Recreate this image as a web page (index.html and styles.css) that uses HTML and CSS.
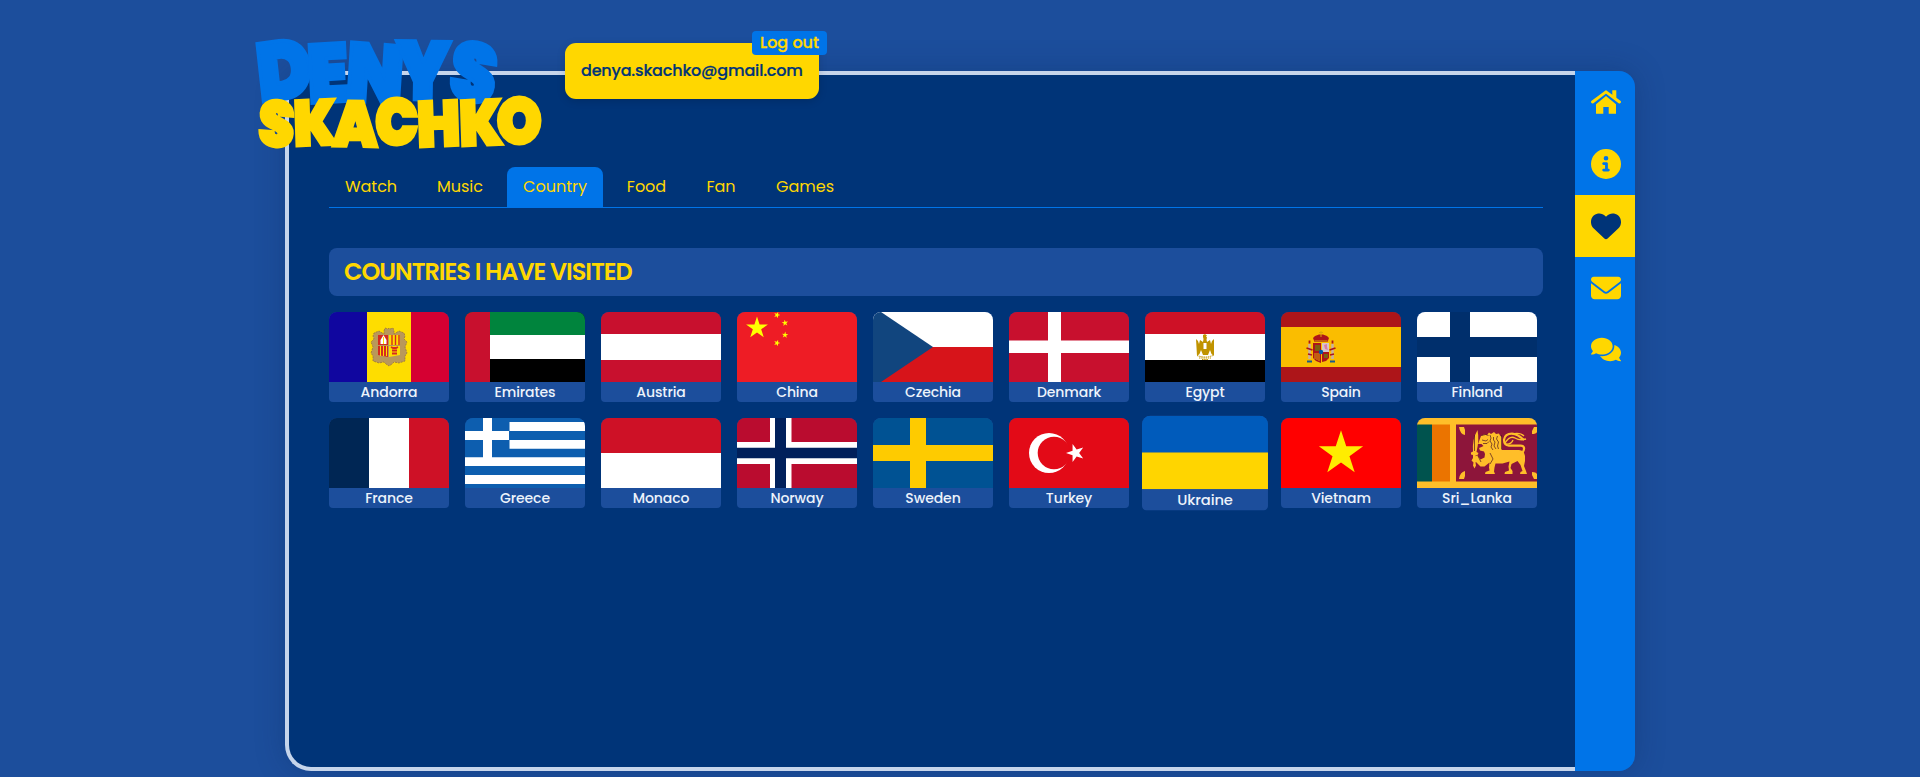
FILE: index.html
```html
<!DOCTYPE html>
<html lang="en">
<head>
<meta charset="utf-8">
<title>Denys Skachko</title>
<link rel="stylesheet" href="styles.css">
</head>
<body>
<div class="frame">
  <svg class="logo" viewBox="0 0 300 130" width="300" height="130" role="img" aria-label="Denys Skachko">
    <g transform="scale(.9 1)">
      <text class="logo-first" x="11 65 105 162 219" y="77 78 75 74 72" rotate="-7 -3 4 1 9">DENYS</text>
      <text class="logo-last" x="8 49 92 139 186 233 274" y="120 121 121 120 122 121 119" rotate="4 -2 1 0 -2 -2 0">SKACHKO</text>
    </g>
  </svg>

  <div class="account">
    <span class="email">denya.skachko@gmail.com</span>
    <a class="logout"><span>Log out</span></a>
  </div>

  <main class="panel">
    <nav class="tabs">
      <a class="tab t-watch">Watch</a>
      <a class="tab t-music">Music</a>
      <a class="tab t-country active">Country</a>
      <a class="tab t-food">Food</a>
      <a class="tab t-fan">Fan</a>
      <a class="tab t-games">Games</a>
    </nav>
    <h2 class="title">COUNTRIES I HAVE VISITED</h2>
    <div class="cards">
      <div class="card"><svg viewBox="0 0 120 70"><path fill="#10069f" d="M0 0h38v70H0z"/><path fill="#fedd00" d="M38 0h44v70H38z"/><path fill="#d50032" d="M82 0h38v70H82z"/><path fill="#b9985a" stroke="#8f6b3c" stroke-width=".7" stroke-dasharray="2 1" d="M55 19l1-3 3 1 1-1 1 1 3-1 1 3 0 3 5-3 5 2 1 3-1 3 3 3-2 5 2 6-2 3v5l-6 2-5-1-2 2-3 2-3-2-2-2-5 1-6-2v-5l-2-3 2-6-2-5 3-3-1-3 1-3 5-2 5 3z"/><path fill="#d52b1e" d="M49 23h10v10H49zM49 34h10v11l-10-2z"/><path fill="#fedd00" d="M60 23h11v10H60zM60 34h11v9l-11 2z"/><path stroke="#d52b1e" stroke-width="1.400" d="M63 23v10M66.500 23v10M70 23v10"/><path stroke="#fedd00" d="M51.500 34v10M54.500 34v10M57.500 34v10"/><path fill="#fff" d="M54.500 23l3 5v4h-6v-4z"/><path stroke="#fedd00" d="M54.500 25v7"/><path stroke="#d52b1e" stroke-width="1.800" d="M62 35l2 1h3l2-1M63 38.500h5M63 41.500h5"/></svg><span>Andorra</span></div>
      <div class="card"><svg viewBox="0 0 120 70"><path d="M0 0h120v70H0z"/><path fill="#fff" d="M0 23h120v24H0z"/><path fill="#00843d" d="M0 0h120v23H0z"/><path fill="#c8102e" d="M0 0h25v70H0z"/></svg><span>Emirates</span></div>
      <div class="card"><svg viewBox="0 0 120 70"><path fill="#c8102e" d="M0 0h120v70H0z"/><path fill="#fff" d="M0 22h120v26H0z"/></svg><span>Austria</span></div>
      <div class="card"><svg viewBox="0 0 120 70"><defs><path id="star" d="M0-10L2.250-3.100 9.510-3.090 3.630 1.180 5.880 8.090 0 3.820-5.880 8.090-3.630 1.180-9.510-3.090-2.250-3.100z"/></defs><path fill="#ee1c25" d="M0 0h120v70H0z"/><g fill="#ff0"><use href="#star" transform="translate(20 16) scale(1.150)"/><use href="#star" transform="translate(40 3) rotate(20) scale(.34)"/><use href="#star" transform="translate(48 11) rotate(-8) scale(.34)"/><use href="#star" transform="translate(48 23) rotate(5) scale(.34)"/><use href="#star" transform="translate(40 31) rotate(20) scale(.34)"/></g></svg><span>China</span></div>
      <div class="card"><svg viewBox="0 0 120 70"><path fill="#fff" d="M0 0h120v35H0z"/><path fill="#d7141a" d="M0 35h120v35H0z"/><path fill="#11457e" d="M0 0h8l52 35L8 70H0z"/></svg><span>Czechia</span></div>
      <div class="card"><svg viewBox="0 0 120 70"><path fill="#c8102e" d="M0 0h120v70H0z"/><path fill="#fff" d="M39 0h13v28.500h68V41H52v29H39V41H0V28.500h39z"/></svg><span>Denmark</span></div>
      <div class="card"><svg viewBox="0 0 120 70"><path fill="#ce1126" d="M0 0h120v22H0z"/><path fill="#fff" d="M0 22h120v26H0z"/><path d="M0 48h120v22H0z"/><path fill="#c09300" d="M51 27l2 2 1 3 1-4 3 2 .5-3-.5-2 0-2 2-1 2 1.500-1 1 1 1-.5 2 .5 2.500 3-2 1 4 1-3 2-2v17l-2.500-2-1.500-4-2 5h-5l-2-5-1.500 4-2.500 2z"/><path fill="#fff" d="M58.500 31h3v6h-3z"/><path fill="none" stroke="#c09300" stroke-dasharray="1.500 .7" d="M52 43.500q8 3 16 0M54 46h12M57 47.500h6"/></svg><span>Egypt</span></div>
      <div class="card"><svg viewBox="0 0 120 70"><path fill="#ad1519" d="M0 0h120v70H0z"/><path fill="#fabd00" d="M0 15h120v40H0z"/><path fill="#ad1519" d="M33.500 30l-1.500-4 2-2 4-1.500h4l4 1.500 2 2-1.500 4zM32 31h8v9h-8zM32 40h8v11l-5-2-3-3zM41 40h7v6l-3 3-4 1z"/><path stroke="#c8b1a0" stroke-width="2.500" d="M28.500 32v15M51.500 32v15"/><path stroke="#ad1519" stroke-width="1.800" d="M25.500 36l6 2M27 42l4 1M48.500 38l6-2M49 43l4-1M28.500 28.500v3M51.500 28.500v3"/><path fill="#d5c5cb" d="M41 31h7v9h-7z"/><path fill="#db7aa5" d="M43 33l3-1v3l1 3-3-1z"/><path fill="#7d5f10" d="M34 33h5v6h-5zM43 42h4v4h-4z"/><path stroke="#d8a70a" d="M34 41v6M36 41v7M38 41v8M33.500 29h13M40 19v6M38 20.500h4"/><circle cx="40" cy="40" r="2.200" fill="#0057a8"/><path stroke="#1a5a8c" stroke-width="2" d="M26 49.500h5M49 49.500h5"/></svg><span>Spain</span></div>
      <div class="card"><svg viewBox="0 0 120 70"><path fill="#fff" d="M0 0h120v70H0z"/><path fill="#002f6c" d="M33 0h20v25h67v20H53v25H33V45H0V25h33z"/></svg><span>Finland</span></div>
      <div class="card"><svg viewBox="0 0 120 70"><path fill="#002654" d="M0 0h40v70H0z"/><path fill="#fff" d="M40 0h40v70H40z"/><path fill="#ce1126" d="M80 0h40v70H80z"/></svg><span>France</span></div>
      <div class="card"><svg viewBox="0 0 120 70"><path fill="#0d5eaf" d="M0 0h120v70H0z"/><path fill="#fff" d="M44.500 4H120v9H44.500zM44.500 22H120v8.800H44.500zM0 39.300h120V48H0zM0 57h120v9H0zM0 13h44v9H0zM18 0h9v40h-9z"/></svg><span>Greece</span></div>
      <div class="card"><svg viewBox="0 0 120 70"><path fill="#ce1126" d="M0 0h120v35H0z"/><path fill="#fff" d="M0 35h120v35H0z"/></svg><span>Monaco</span></div>
      <div class="card"><svg viewBox="0 0 120 70"><path fill="#ba0c2f" d="M0 0h120v70H0z"/><path fill="#fff" d="M33 0h21.500v24H120v22H54.500v24H33V46H0V24h33z"/><path fill="#00205b" d="M38 0h11v29.700h71v10.600H49V70H38V40.300H0V29.700h38z"/></svg><span>Norway</span></div>
      <div class="card"><svg viewBox="0 0 120 70"><path fill="#005293" d="M0 0h120v70H0z"/><path fill="#fecb00" d="M37 0h16v27h67v16H53v27H37V43H0V27h37z"/></svg><span>Sweden</span></div>
      <div class="card"><svg viewBox="0 0 120 70"><path fill="#e30a17" d="M0 0h120v70H0z"/><circle cx="40" cy="35" r="20" fill="#fff"/><circle cx="45" cy="35" r="16.300" fill="#e30a17"/><use href="#star" fill="#fff" transform="translate(66.500 35) rotate(-90) scale(.95)"/></svg><span>Turkey</span></div>
      <div class="card hovered"><svg viewBox="0 0 120 70"><path fill="#005bbb" d="M0 0h120v35H0z"/><path fill="#ffd500" d="M0 35h120v35H0z"/></svg><span>Ukraine</span></div>
      <div class="card"><svg viewBox="0 0 120 70"><path fill="red" d="M0 0h120v70H0z"/><use href="#star" fill="#ffed00" transform="translate(60 35.500) scale(2.330)"/></svg><span>Vietnam</span></div>
      <div class="card"><svg viewBox="0 0 120 70"><path fill="#ffbe29" d="M0 0h120v70H0z"/><path fill="#00534e" d="M0 6.500h15v57H0z"/><path fill="#eb7400" d="M15 6.500h18v57H15z"/><path fill="#8d153a" d="M39 6.500h81v57H39z"/><g fill="#ffbe29"><path d="M42 9h5l1 3v5q-5-1-6-8zM42 61h5l1-3v-5q-5 1-6 8zM120 9h-3l-2 4v3q4 0 5-2zM120 61h-3l-2-4v-3q4 0 5 2z"/><path d="M60.500 12q2 10-1 22l2 1-1 2-2 .5v3l2 2-2 2 .500 3-1.500 3-1.500-3 .5-3-2-2 1.500-2.500v-3l-2-.5 0-2 2-1q-1-12 4.500-21.500z"/><path d="M64 18l3-1.500 3 .5 2-2.500 2 1.500 3-2 2 2 3-.5 1 2 2 2 0 12.500h17q5 0 6 6l0 5-1 5 2 5 1 3h-7l.5-2 2-1-2-6-3-4-6 3-1 4 2 3v3h-8l.500-2 4-1.500-.500-4 1-5-7 2h-7l-1 4-.500 4 1 2.500h-10l.500-2 4-1.500-.500-3 .500-5-5 4h-4l-5-5-1-5 3-1 3 4 4-2 .500-3.500-1-2.500-4-1-1-2.500 2.500-1 2-1-2-2-3.500 0z"/></g><path fill="none" stroke="#ffbe29" stroke-width="2.200" d="M105.500 35q4-7-2-7.300H92q-5-.7-5-6 1-6 8-6 5 0 12 6.300"/><path fill="none" stroke="#ffbe29" stroke-width="1.400" d="M88 25q5-8 10-5t11 1M95 16q8-2 12 2M88 26q6 1 8-4"/><path fill="none" stroke="#4d1722" stroke-width=".7" d="M64.500 17.500l4-1 3 1M65 22l4 1 2-1.500M66 25.500h4l2-2M73 17l1 3-1 3 2 3-1 3 2 3M76.500 19v3l1.500 2-1 4 2 3M80.500 18l-1 3 2 3-1 4 1 3M84.500 17v14.500M73 35l3 6-3 5M57.500 17v16M61 38l3 6"/></svg><span>Sri_Lanka</span></div>
    </div>
  </main>

  <nav class="sidebar">
    <a><svg viewBox="0 0 30 24" width="30" height="24"><path d="M21.300.3h4V9l-4-3.200z"/><path fill="none" stroke="#ffd700" stroke-width="2.900" stroke-linecap="round" stroke-linejoin="round" d="M1.500 12L15 1.800 28.500 12"/><path d="M5 14.200L15 6l10 8.200v9.500h-7.300V17h-5.400v6.700H5z"/></svg></a>
    <a><svg viewBox="0 0 512 512" width="30" height="30"><path fill-rule="evenodd" d="M256 512A256 256 0 1 0 256 0a256 256 0 1 0 0 512zM216 336h24V272H216c-13.300 0-24-10.700-24-24s10.700-24 24-24h48c13.300 0 24 10.700 24 24v88h8c13.300 0 24 10.700 24 24s-10.700 24-24 24H216c-13.300 0-24-10.700-24-24s10.700-24 24-24zM256 118a40 40 0 1 1 0 80 40 40 0 1 1 0-80z"/></svg></a>
    <a class="current"><svg viewBox="0 0 512 512" width="30" height="30"><path d="M47.600 300.400L228.300 469.100c7.500 7 17.400 10.900 27.700 10.900s20.200-3.900 27.700-10.900L464.400 300.400c30.400-28.300 47.600-68 47.600-109.500v-5.800c0-69.900-50.500-129.500-119.400-141C347 36.500 300.600 51.400 268 84L256 96 244 84c-32.600-32.600-79-47.500-124.600-39.900C50.500 55.600 0 115.200 0 185.100v5.800c0 41.500 17.200 81.200 47.600 109.500z"/></svg></a>
    <a><svg viewBox="0 0 512 512" width="30" height="30"><path d="M48 64C21.500 64 0 85.500 0 112c0 15.100 7.100 29.300 19.200 38.400L236.800 313.600c11.400 8.500 27 8.500 38.400 0L492.800 150.400c12.100-9.100 19.200-23.300 19.200-38.400c0-26.500-21.500-48-48-48H48zM0 176V384c0 35.300 28.700 64 64 64H448c35.300 0 64-28.700 64-64V176L294.400 339.200c-22.800 17.100-54 17.100-76.800 0L0 176z"/></svg></a>
    <a class="chat"><svg viewBox="0 0 576 512" width="30" height="27"><path d="M416 192c0-88.400-93.100-160-208-160S0 103.600 0 192c0 34.300 14.100 65.900 38 92-13.400 30.200-35.500 54.200-35.800 54.500-2.200 2.300-2.800 5.700-1.500 8.700S4.800 352 8 352c36.600 0 66.900-12.300 88.700-25 32.200 15.700 70.300 25 111.300 25 114.900 0 208-71.600 208-160zm122 220c23.900-26 38-57.700 38-92 0-66.900-53.500-124.200-129.300-148.100.9 6.600 1.300 13.300 1.300 20.100 0 105.900-107.700 192-240 192-10.800 0-21.300-.8-31.700-1.900C207.800 439.600 281.800 480 368 480c41 0 79.100-9.200 111.300-25 21.800 12.700 52.100 25 88.700 25 3.200 0 6.100-1.900 7.300-4.800 1.300-2.900.7-6.300-1.500-8.700-.3-.3-22.400-24.200-35.800-54.500z"/></svg></a>
  </nav>
</div>
</body>
</html>
```
FILE: styles.css
```css
* { box-sizing: border-box; }

body {
  margin: 0;
  height: 777px;
  padding: 71px 0 0 285px;
  overflow: hidden;
  background: #1c4e9c;
  font-family: Poppins, Inter, "Open Sans", sans-serif;
  color: #ffd700;
}

.frame {
  position: relative;
  display: flex;
  width: 1350px;
  height: 700px;
  border-radius: 26px 16px 16px 26px;
  box-shadow: 0 0 30px rgba(0, 30, 70, .25);
}

.panel {
  flex: 1;
  padding: 92px 32px 0 40px;
  background: #003478;
  border: 4px solid #c6d5eb;
  border-right: 0;
  border-radius: 26px 0 0 26px;
}

/* Logo overlapping the panel's corner */
.logo {
  position: absolute;
  left: -35px;
  top: -46px;
  overflow: visible;
}
.logo text {
  font-family: Poppins, Inter, sans-serif;
  font-weight: 900;
  stroke-linejoin: miter;
}
.logo-first { font-size: 82px; fill: #0074e8; stroke: #0074e8; stroke-width: 4px; }
.logo-last { font-size: 64px; fill: #ffd700; stroke: #ffd700; stroke-width: 3px; }

/* Account chip */
.account {
  position: absolute;
  left: 280px;
  top: -28px;
  width: 254px;
  height: 56px;
  padding-left: 16px;
  line-height: 55px;
  white-space: nowrap;
  background: #ffd700;
  border-radius: 11px;
  box-shadow: 0 2px 8px rgba(0, 0, 0, .15);
}
.email { font-size: 16px; font-weight: 500; letter-spacing: -.18px; color: #003478; -webkit-text-stroke: .2px #003478; }
.logout {
  position: absolute;
  right: -8px;
  top: -12px;
  width: 75px;
  height: 24px;
  line-height: 23px;
  text-align: center;
  font-size: 16px;
  font-weight: 500;
  background: #0074e8;
  border-radius: 4px;
  -webkit-text-stroke: .3px #ffd700;
}

/* Tabs */
.tabs {
  display: flex;
  gap: 8px;
  height: 41px;
  border-bottom: 1px solid #0074e8;
}
.tab {
  height: 40px;
  line-height: 39px;
  text-align: center;
  font-size: 16px;
  border-radius: 8px 8px 0 0;
}
.tab.active { background: #0074e8; }
.t-watch { width: 84px; }
.t-music { width: 78px; }
.t-country { width: 96px; }
.t-food { width: 71px; }
.t-fan { width: 62px; }
.t-games { width: 90px; }

.title {
  margin: 40px 0 16px;
  height: 48px;
  padding-left: 15px;
  line-height: 48px;
  font-size: 24px;
  font-weight: 600;
  letter-spacing: -1px;
  white-space: nowrap;
  background: #1c4e9c;
  border-radius: 8px;
}

/* Flags */
.cards { display: flex; flex-wrap: wrap; gap: 16px; }
.card {
  width: 120px;
  height: 90px;
  overflow: hidden;
  background: #1c4e9c;
  border-radius: 8px 8px 4px 4px;
}
.card svg { display: block; width: 120px; height: 70px; }
.card span {
  display: block;
  line-height: 20px;
  text-align: center;
  font-size: 14px;
  font-weight: 500;
  letter-spacing: -.1px;
  color: #edf3fb;
}
.card.hovered { transform: scale(1.05); }

/* Icon sidebar */
.sidebar {
  width: 60px;
  overflow: hidden;
  background: #0074e8;
  border-radius: 0 16px 16px 0;
}
.sidebar a {
  display: flex;
  align-items: center;
  justify-content: center;
  height: 62px;
  padding-left: 2px;
}
.sidebar .chat { padding-bottom: 2px; }
.sidebar svg { fill: #ffd700; }
.sidebar .current { background: #ffd700; }
.sidebar .current svg { fill: #003478; }
```
